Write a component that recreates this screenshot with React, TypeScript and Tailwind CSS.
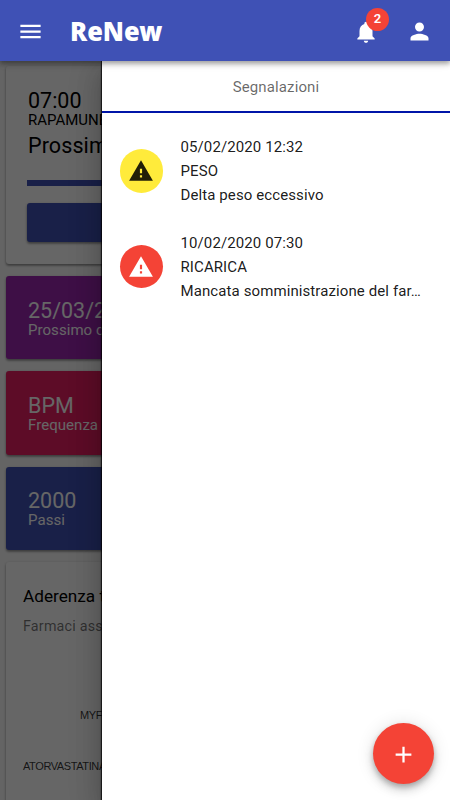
import type { ReactNode } from "react";

interface Alert {
  date: string;
  type: string;
  message: string;
  severity: "warning" | "error";
}

const alerts: Alert[] = [
  {
    date: "05/02/2020 12:32",
    type: "PESO",
    message: "Delta peso eccessivo",
    severity: "warning",
  },
  {
    date: "10/02/2020 07:30",
    type: "RICARICA",
    message: "Mancata somministrazione del far…",
    severity: "error",
  },
];

const stats = [
  { value: "25/03/2020", label: "Prossimo controllo", color: "bg-[#9c27b0]" },
  { value: "BPM", label: "Frequenza", color: "bg-[#e91e63]" },
  { value: "2000", label: "Passi", color: "bg-[#3f51b5]" },
];

const ICONS = {
  menu: "M3 18h18v-2H3v2zm0-5h18v-2H3v2zm0-7v2h18V6H3z",
  bell: "M12 22c1.1 0 2-.9 2-2h-4c0 1.1.89 2 2 2zm6-6v-5c0-3.07-1.64-5.64-4.5-6.32V4c0-.83-.67-1.5-1.5-1.5s-1.5.67-1.5 1.5v.68C7.63 5.36 6 7.92 6 11v5l-2 2v1h16v-1l-2-2z",
  person:
    "M12 12c2.21 0 4-1.79 4-4s-1.79-4-4-4-4 1.79-4 4 1.79 4 4 4zm0 2c-2.67 0-8 1.34-8 4v2h16v-2c0-2.66-5.33-4-8-4z",
  warning: "M1 21h22L12 2 1 21zm12-3h-2v-2h2v2zm0-4h-2v-4h2v4z",
  add: "M19 13h-6v6h-2v-6H5v-2h6V5h2v6h6v2z",
};

function Icon({ name, className }: { name: keyof typeof ICONS; className?: string }) {
  return (
    <svg viewBox="0 0 24 24" fill="currentColor" className={`shrink-0 ${className ?? "size-[26px]"}`}>
      <path d={ICONS[name]} />
    </svg>
  );
}

function Card({ className, children }: { className: string; children?: ReactNode }) {
  return (
    <div
      className={`shrink-0 rounded-[3px] shadow-[0_1px_3px_rgba(0,0,0,0.3),0_2px_2px_rgba(0,0,0,0.2)] ${className}`}
    >
      {children}
    </div>
  );
}

function Header() {
  return (
    <header className="relative z-30 flex h-[61px] shrink-0 items-center bg-[#3f51b5] px-[17px] text-white shadow-[0_2px_4px_rgba(0,0,0,0.2),0_4px_5px_rgba(0,0,0,0.14),0_1px_10px_rgba(0,0,0,0.12)]">
      <Icon name="menu" className="mt-[2px] size-[27px]" />
      <h1 className="ml-[26px] origin-left scale-x-[0.94] font-['Noto_Sans',sans-serif] text-[27px] leading-none font-black">
        ReNew
      </h1>
      <div className="relative ml-auto pt-[2px]">
        <Icon name="bell" />
        <span className="absolute -top-[9px] left-[13px] flex size-[23px] items-center justify-center rounded-full bg-[#f44336] text-[13px] font-semibold">
          2
        </span>
      </div>
      <Icon name="person" className="mt-[2px] ml-[27px] size-[27px]" />
    </header>
  );
}

function Dashboard() {
  return (
    <main className="flex w-[450px] flex-col px-[6px] pt-[5px]">
      <Card className="h-[198px] bg-white px-[21px] pt-[22px]">
        <div className="pl-px text-[21.5px] leading-[25px]">07:00</div>
        <div className="pl-px text-[15px] leading-[14px]">RAPAMUNE</div>
        <div className="mt-[6px] pl-px text-[21.5px] leading-[26px] tracking-[0.1px]">Prossima</div>
        <div className="mt-[21px] h-[6px] bg-[#3f51b5]" />
        <Card className="mt-[17px] h-[39px] bg-[#3f51b5]" />
      </Card>

      {stats.map(({ value, label, color }) => (
        <Card key={label} className={`mt-[12px] h-[83.3px] px-[22px] pt-[21.6px] text-white ${color}`}>
          <div className="text-[21.5px] leading-[25px]">{value}</div>
          <div className="text-[15px] leading-[14px] tracking-[0.05px]">{label}</div>
        </Card>
      ))}

      <Card className="mt-[12px] h-[300px] bg-white px-[17px] pt-[22px]">
        <div className="text-[17.2px] leading-[24px]">Aderenza terapia</div>
        <div className="mt-[8px] text-[14.3px] leading-[20px] tracking-[0.2px] text-black/55">
          Farmaci assunti
        </div>
        <div className="mt-[69px] flex flex-col gap-[31px] font-['Liberation_Sans',sans-serif] text-[11px] leading-[20px] tracking-[-0.4px] text-black/80">
          <span className="pl-[57px]">MYFORTIC</span>
          <span>ATORVASTATINA</span>
        </div>
      </Card>
    </main>
  );
}

function AlertRow({ alert }: { alert: Alert }) {
  const isWarning = alert.severity === "warning";
  return (
    <li className="flex h-[95.5px] items-center pr-[20px] pl-[17.5px]">
      <div
        className={`flex size-[43.5px] shrink-0 items-center justify-center rounded-full ${
          isWarning ? "bg-[#ffeb3b] text-black/87" : "bg-[#f44336] text-white"
        }`}
      >
        <Icon name="warning" />
      </div>
      <div className="ml-[17.5px] min-w-0 flex-1 text-[15px] leading-[24px] tracking-[0.1px] text-black/90">
        <div>{alert.date}</div>
        <div>{alert.type}</div>
        <div className="truncate">{alert.message}</div>
      </div>
    </li>
  );
}

export default function App() {
  return (
    <div className="relative flex h-[800px] w-[450px] flex-col overflow-hidden bg-[#fafafa] font-[Roboto,sans-serif] text-black">
      <Header />
      <Dashboard />

      {/* backdrop */}
      <div className="absolute inset-0 z-10 bg-black/60" />

      {/* notifications drawer */}
      <aside className="absolute top-[61px] right-0 bottom-0 z-20 w-[348px] bg-white shadow-[-1px_0_1px_rgba(0,0,0,0.7),0_8px_10px_-5px_rgba(0,0,0,0.2),0_16px_24px_2px_rgba(0,0,0,0.14),0_6px_30px_5px_rgba(0,0,0,0.12)]">
        <div className="flex h-[52px] items-center justify-center border-b-2 border-[#0015a8] pt-[2px] text-[15px] tracking-[0.12px] text-black/60">
          Segnalazioni
        </div>
        <ul className="pt-[10.4px]">
          {alerts.map((alert) => (
            <AlertRow key={alert.date} alert={alert} />
          ))}
        </ul>
      </aside>

      <button className="absolute right-[16px] bottom-[16px] z-30 flex size-[61px] items-center justify-center rounded-full bg-[#f44336] text-white shadow-[0_3px_5px_rgba(0,0,0,0.2),0_6px_10px_rgba(0,0,0,0.14),0_1px_18px_rgba(0,0,0,0.12)]">
        <Icon name="add" className="mt-px size-[27px]" />
      </button>
    </div>
  );
}
